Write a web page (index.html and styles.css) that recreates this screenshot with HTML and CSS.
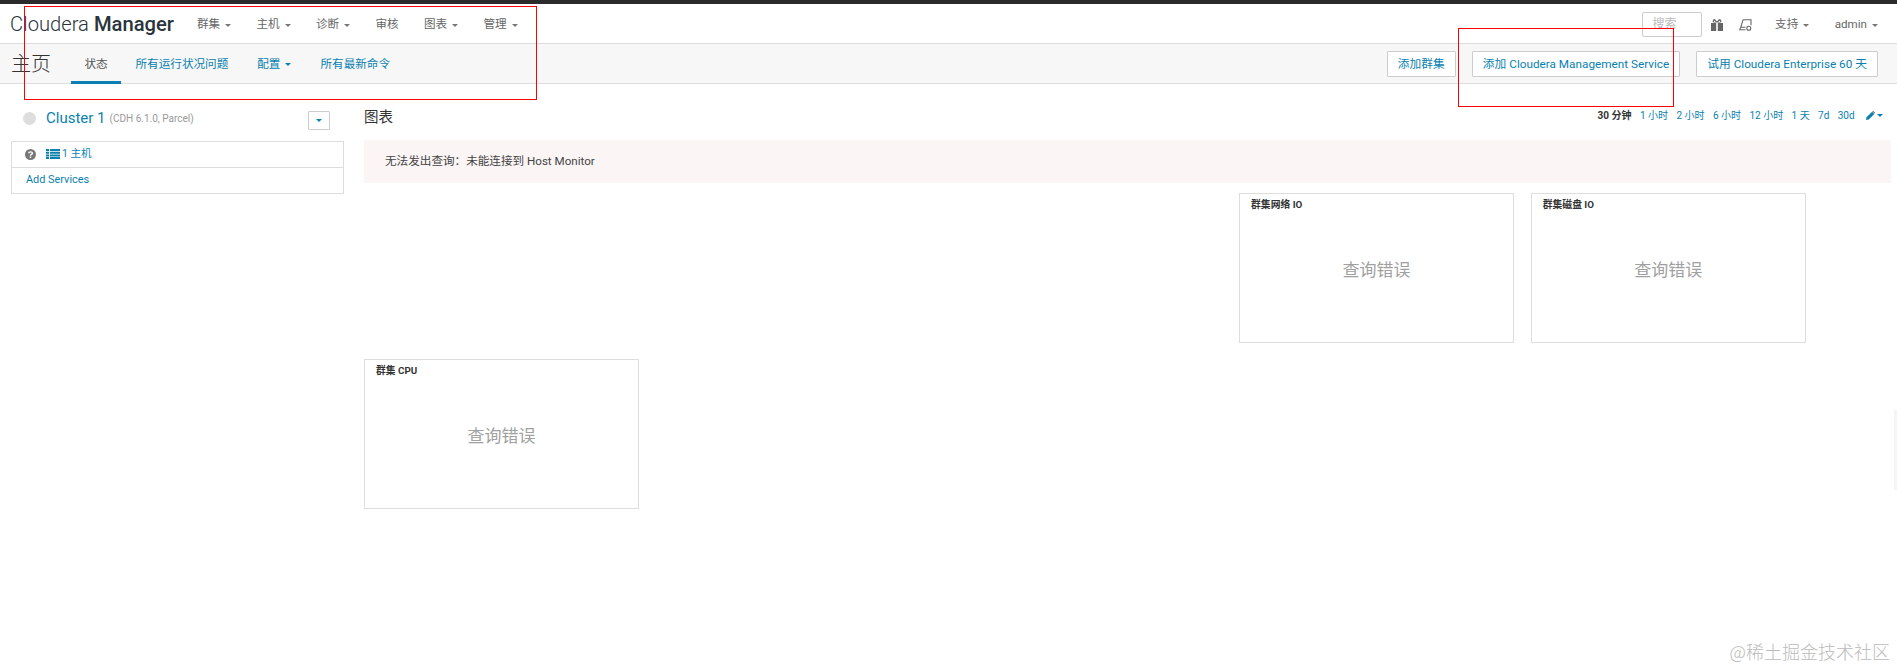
FILE: index.html
```html
<!DOCTYPE html>
<html lang="zh">
<head>
<meta charset="utf-8">
<title>Cloudera Manager</title>
<link rel="stylesheet" href="styles.css">
</head>
<body>
<div class="topline"></div>
<header class="navbar">
  <div class="brand"><span class="brand-light">Cloudera</span> <b>Manager</b></div>
  <nav class="mainnav">
    <a>群集<i class="caret"></i></a>
    <a>主机<i class="caret"></i></a>
    <a>诊断<i class="caret"></i></a>
    <a class="short">审核</a>
    <a>图表<i class="caret"></i></a>
    <a>管理<i class="caret"></i></a>
  </nav>
  <div class="navright">
    <div class="search">搜索</div>
    <svg class="ico gift" viewBox="0 0 12 12"><path fill="#666" d="M0 4h5.200v8H0zM6.800 4H12v8H6.800z"/><path fill="#666" d="M2.200.5 3.800 0 6 2.600 8.200 0l1.600.5.700 2-1 1H2.500l-1-1z"/><path fill="#fff" d="M3.300 1.500 4.600 3H2.800zM8.700 1.500 7.400 3h1.800z"/></svg>
    <svg class="ico user" viewBox="0 0 13 12" fill="none" stroke="#666" stroke-width="1.100"><path d="M4 .8h8v5.400M4 .8 1.800 8.300H6.500M1.800 8.300 .8 10.800H6.500"/><circle cx="9.800" cy="9.300" r="2"/></svg>
    <a class="r1">支持<i class="caret"></i></a>
    <a class="r2">admin<i class="caret"></i></a>
  </div>
</header>
<section class="subbar">
  <h1>主页</h1>
  <div class="tabs">
    <a class="active">状态</a>
    <a>所有运行状况问题</a>
    <a>配置<i class="caret blue"></i></a>
    <a>所有最新命令</a>
  </div>
  <div class="actions">
    <a class="btn">添加群集</a>
    <a class="btn">添加 Cloudera Management Service</a>
    <a class="btn">试用 Cloudera Enterprise 60 天</a>
  </div>
</section>
<main class="content">
  <aside class="side">
    <div class="clusterhead">
      <span class="dot"></span>
      <a class="cname">Cluster 1</a>
      <small>(CDH 6.1.0, Parcel)</small>
      <span class="ddbtn"><i class="caret blue"></i></span>
    </div>
    <div class="sidebox">
      <div class="row hostrow">
        <svg class="qm" viewBox="0 0 12 12"><circle cx="6" cy="6" r="6" fill="#777"/><path d="M4 4.700C4.100 2.700 8.100 2.600 8.100 4.700 8.100 6 6 5.900 6 7.300" fill="none" stroke="#fff" stroke-width="1.500"/><rect x="5.200" y="8.200" width="1.600" height="1.600" fill="#fff"/></svg>
        <svg class="list" viewBox="0 0 14 10"><path fill="#0a7fb0" d="M0 0h3v2H0zM4 0h10v2H4zM0 2.700h3v2H0zM4 2.700h10v2H4zM0 5.400h3v2H0zM4 5.400h10v2H4zM0 8h3v2H0zM4 8h10v2H4z"/></svg>
        <a>1 主机</a>
      </div>
      <div class="row"><a>Add Services</a></div>
    </div>
  </aside>
  <section class="charts">
    <div class="chartshead">
      <h2>图表</h2>
      <div class="ranges">
        <b>30 分钟</b><a>1 小时</a><a>2 小时</a><a>6 小时</a><a>12 小时</a><a>1 天</a><a>7d</a><a>30d</a>
        <span class="pencil"><svg viewBox="0 0 10 10"><path fill="#0a7fb0" d="M0 10l.6-3L6.800.8 9.200 3.200 3 9.400z"/><path fill="#555" d="M7.500.1 8 0l2 2-.1.500-.4.400-2.400-2.400z"/></svg><i class="caret blue"></i></span>
      </div>
    </div>
    <div class="alert">无法发出查询：未能连接到 Host Monitor</div>
    <div class="grid">
      <div class="card c-net"><div class="ctitle">群集网络 IO</div><div class="cerr">查询错误</div></div>
      <div class="card c-disk"><div class="ctitle">群集磁盘 IO</div><div class="cerr">查询错误</div></div>
      <div class="card c-cpu"><div class="ctitle">群集 CPU</div><div class="cerr">查询错误</div></div>
    </div>
  </section>
</main>
<div class="annot a1"></div>
<div class="annot a2"></div>
<div class="edgetab"></div>
<div class="watermark">@稀土掘金技术社区</div>
</body>
</html>
```
FILE: styles.css
```css
* { box-sizing: border-box; }
html, body { margin: 0; height: 100%; }
body { width: 1897px; height: 667px; overflow: hidden; position: relative; background: #fff; color: #333; font: 11.6px/1.4 Roboto, "Noto Sans CJK SC", sans-serif; }
a { color: #0a7fb0; }
.topline { height: 4px; background: #2b2b2b; }
.caret { display: inline-block; width: 0; height: 0; margin-left: 5px; vertical-align: middle; border-left: 3.5px solid transparent; border-right: 3.5px solid transparent; border-top: 3.5px solid #777; }
.caret.blue { border-top-color: #0a7fb0; }
.navbar { height: 40px; display: flex; align-items: center; padding: 2px 0 0 10px; border-bottom: 1px solid #ddd; }
.brand { font-size: 20.2px; color: #29343c; width: 187px; white-space: nowrap; }
.brand-light { font-weight: 300; }
.brand b { font-weight: 500; }
.mainnav { display: flex; }
.mainnav a { color: #666; width: 59.5px; white-space: nowrap; }
.mainnav a.short { width: 48.5px; }
.navright { margin-left: auto; display: flex; align-items: center; color: #666; padding-right: 19px; }
.navright a { color: #666; white-space: nowrap; }
.search { width: 60px; height: 25px; border: 1px solid #ccc; border-radius: 2px; padding-left: 10px; line-height: 23px; color: #bbb; font-size: 12px; }
.ico { height: 12px; }
.gift { width: 12px; margin-left: 9.5px; }
.user { width: 13px; margin-left: 16px; }
.r1 { margin-left: 23px; }
.r2 { margin-left: 25.5px; }
.subbar { height: 40px; display: flex; align-items: stretch; background: #f7f7f7; border-bottom: 1px solid #ddd; padding-left: 11px; }
.subbar h1 { margin: 0; font-size: 20px; font-weight: 300; line-height: 41px; color: #333; width: 60px; }
.tabs { display: flex; }
.tabs a { padding: 0 14.5px; line-height: 40px; height: 40px; white-space: nowrap; }
.tabs a.active { color: #555; width: 50px; padding: 0; text-align: center; border-bottom: 3px solid #0a7fb0; }
.actions { margin-left: auto; display: flex; align-items: center; padding-right: 19px; gap: 16px; }
.btn { height: 26px; line-height: 24px; padding: 0 10px; font-size: 11.75px; background: #fff; border: 1px solid #ccc; border-radius: 1px; white-space: nowrap; }
.content { display: flex; padding: 0 0 0 11px; }
.side { width: 333px; padding-top: 20px; }
.clusterhead { display: flex; align-items: center; height: 28px; padding-left: 12px; }
.dot { width: 13px; height: 13px; border-radius: 50%; background: #ddd; }
.cname { font-size: 15px; margin-left: 10px; }
.clusterhead small { font-size: 10px; color: #999; margin-left: 4px; padding-top: 1px; }
.ddbtn { margin: 4px 14px 0 auto; width: 22px; height: 19px; border: 1px solid #ccc; display: flex; align-items: center; justify-content: center; border-radius: 1px; }
.ddbtn .caret { margin: 0; }
.sidebox { border: 1px solid #ddd; margin-top: 9px; }
.row { height: 25.5px; padding-left: 14px; font-size: 10.9px; line-height: 24px; }
.hostrow { display: flex; align-items: center; border-bottom: 1px solid #ddd; padding-left: 13px; }
.hostrow a { font-size: 10.5px; }
.qm { width: 11px; height: 11px; }
.list { width: 14px; height: 10px; margin: 0 2px 0 10px; }
.charts { width: 1527px; margin-left: 20px; }
.chartshead { height: 56px; display: flex; justify-content: space-between; }
.chartshead h2 { margin: 24px 0 0; font-size: 14.5px; font-weight: 400; line-height: 20px; }
.ranges { padding: 25px 8px 0 0; font-size: 10px; display: flex; gap: 8.4px; height: 40px; white-space: nowrap; }
.pencil { display: flex; align-items: flex-start; margin-left: 3px; padding-top: 2px; }
.pencil svg { width: 9px; height: 9px; }
.pencil .caret { margin: 3px 0 0 2px; border-left-width: 3px; border-right-width: 3px; border-top-width: 3px; }
.alert { height: 43px; background: #fbf5f5; padding-left: 21px; line-height: 42px; color: #444; }
.grid { display: grid; grid-template-columns: repeat(5, 275px); column-gap: 16.7px; row-gap: 16px; grid-template-rows: 150px 150px; padding-top: 10px; }
.card { border: 1px solid #ddd; position: relative; }
.c-net { grid-column: 4; grid-row: 1; }
.c-disk { grid-column: 5; grid-row: 1; }
.c-cpu { grid-column: 1; grid-row: 2; }
.ctitle { font-size: 9.8px; font-weight: 700; padding: 4px 0 0 11px; color: #333; line-height: 14px; }
.cerr { font-size: 17px; color: #a0a0a0; text-align: center; font-weight: 400; margin-top: 43px; line-height: 30px; }
.annot { position: absolute; border: 1px solid #f00; }
.a1 { left: 24px; top: 6px; width: 513px; height: 94px; }
.a2 { left: 1458px; top: 28px; width: 216px; height: 79px; }
.edgetab { position: absolute; right: 0; top: 410px; width: 3px; height: 80px; background: #f5f5f5; }
.watermark { position: absolute; right: 7px; top: 639px; font: 18px/24px "Noto Sans CJK SC", sans-serif; color: #bbb; font-weight: 300; white-space: nowrap; }
```
